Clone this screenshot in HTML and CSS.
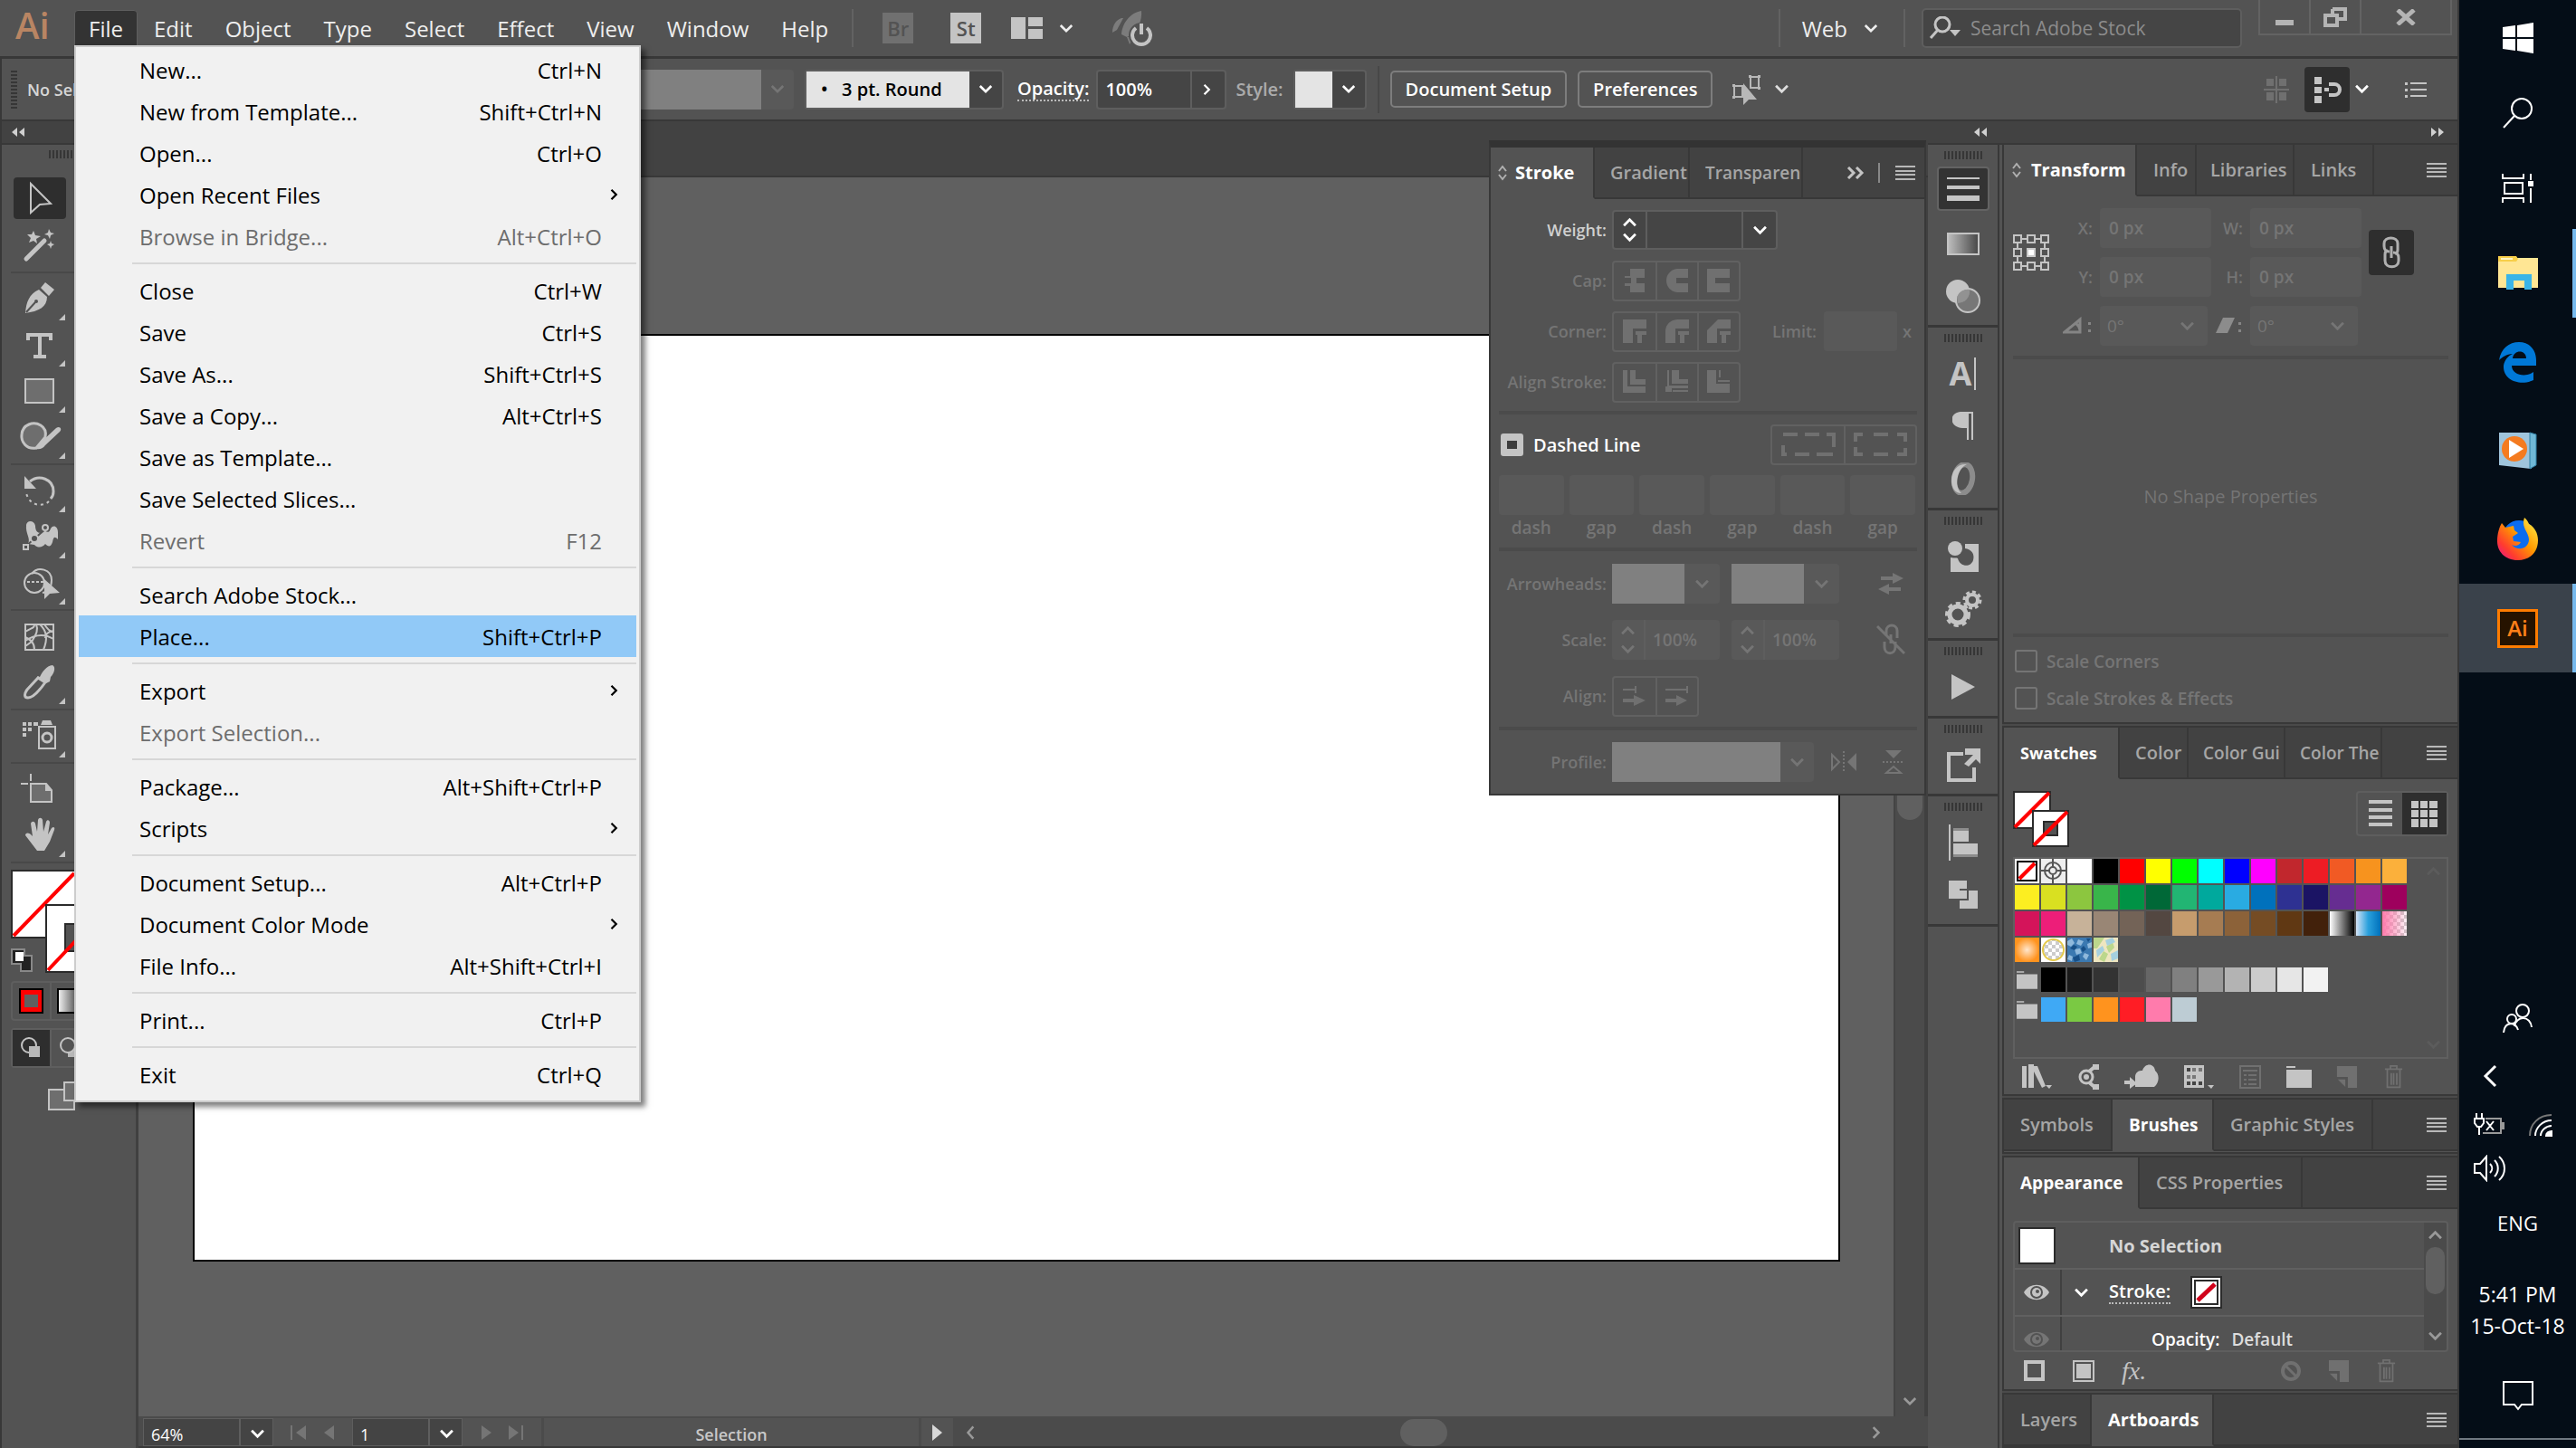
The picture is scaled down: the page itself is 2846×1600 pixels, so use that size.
FILE: index.html
```html
<!DOCTYPE html>
<html lang="en">

<head>
    <meta charset="UTF-8">
    <meta name="viewport" content="width=device-width, initial-scale=1.0">
    <title>Illustrator Workspace</title>
    <link rel="stylesheet" href="styles.css">
</head>

<body>
    <!-- Shared icons -->
    <svg class="sprite" aria-hidden="true">
        <symbol id="chev-down" viewBox="0 0 18 12"><path d="M2 2l7 7 7-7" fill="none" stroke="currentColor" stroke-width="3" /></symbol>
        <symbol id="chev-up" viewBox="0 0 18 12"><path d="M2 10l7-7 7 7" fill="none" stroke="currentColor" stroke-width="3" /></symbol>
        <symbol id="chev-right" viewBox="0 0 12 18"><path d="M2 2l7 7-7 7" fill="none" stroke="currentColor" stroke-width="3" /></symbol>
        <symbol id="chev-left" viewBox="0 0 12 18"><path d="M10 1L3 9l7 8" fill="none" stroke="currentColor" stroke-width="3" /></symbol>
        <symbol id="collapse" viewBox="0 0 16 12"><path d="M7 1v10L1 6zM15 1v10L9 6z" fill="currentColor" /></symbol>
        <symbol id="expand" viewBox="0 0 16 12"><path d="M1 1v10l6-5zM9 1v10l6-5z" fill="currentColor" /></symbol>
        <symbol id="lines" viewBox="0 0 22 16"><path d="M0 1h22M0 6h22M0 10h22M0 15h22" stroke="currentColor" stroke-width="2" /></symbol>
        <symbol id="updown" viewBox="0 0 12 20"><path d="M2 8l4-5 4 5M2 12l4 5 4-5" fill="none" stroke="currentColor" stroke-width="2" /></symbol>
        <symbol id="trash" viewBox="0 0 24 32"><path d="M1 6h22M8 5V2h8v3M4 7v22h16V7M9 11v15M12 11v15M16 11v15" fill="none" stroke="currentColor" stroke-width="2" /></symbol>
        <symbol id="newitem" viewBox="0 0 24 26"><path d="M0 0h24v26H13V13H0zM1 16h9v9z" fill="currentColor" /></symbol>
        <symbol id="folder" viewBox="0 0 28 24"><path d="M0 0h10v2H0zM0 4h28v20H0z" fill="currentColor" /></symbol>
        <symbol id="eye" viewBox="0 0 30 20"><path d="M1 10C7-1 23-1 29 10 23 21 7 21 1 10z" fill="currentColor" /><circle cx="15" cy="10" r="7" fill="#535353" /><circle cx="15" cy="10" r="5" fill="currentColor" /><circle cx="16" cy="9" r="2" fill="#535353" /></symbol>
    </svg>

    <div class="desktop">
        <div class="app">
            <header class="menubar">
                <span class="logo">Ai</span>
                <nav class="menus">
                    <div class="menu-root">
                        <button class="menu-button open">File</button>
                        <ul class="dropdown">
                            <li><button class="item">New...<kbd>Ctrl+N</kbd></button></li>
                            <li><button class="item">New from Template...<kbd>Shift+Ctrl+N</kbd></button></li>
                            <li><button class="item">Open...<kbd>Ctrl+O</kbd></button></li>
                            <li><button class="item sub">Open Recent Files<svg width="9" height="14"><use href="#chev-right" /></svg></button></li>
                            <li><button class="item" disabled>Browse in Bridge...<kbd>Alt+Ctrl+O</kbd></button></li>
                            <li class="sep"></li>
                            <li><button class="item">Close<kbd>Ctrl+W</kbd></button></li>
                            <li><button class="item">Save<kbd>Ctrl+S</kbd></button></li>
                            <li><button class="item">Save As...<kbd>Shift+Ctrl+S</kbd></button></li>
                            <li><button class="item">Save a Copy...<kbd>Alt+Ctrl+S</kbd></button></li>
                            <li><button class="item">Save as Template...</button></li>
                            <li><button class="item">Save Selected Slices...</button></li>
                            <li><button class="item" disabled>Revert<kbd>F12</kbd></button></li>
                            <li class="sep"></li>
                            <li><button class="item">Search Adobe Stock...</button></li>
                            <li><button class="item active">Place...<kbd>Shift+Ctrl+P</kbd></button></li>
                            <li class="sep"></li>
                            <li><button class="item sub">Export<svg width="9" height="14"><use href="#chev-right" /></svg></button></li>
                            <li><button class="item" disabled>Export Selection...</button></li>
                            <li class="sep"></li>
                            <li><button class="item">Package...<kbd>Alt+Shift+Ctrl+P</kbd></button></li>
                            <li><button class="item sub">Scripts<svg width="9" height="14"><use href="#chev-right" /></svg></button></li>
                            <li class="sep"></li>
                            <li><button class="item">Document Setup...<kbd>Alt+Ctrl+P</kbd></button></li>
                            <li><button class="item sub">Document Color Mode<svg width="9" height="14"><use href="#chev-right" /></svg></button></li>
                            <li><button class="item">File Info...<kbd>Alt+Shift+Ctrl+I</kbd></button></li>
                            <li class="sep"></li>
                            <li><button class="item">Print...<kbd>Ctrl+P</kbd></button></li>
                            <li class="sep"></li>
                            <li><button class="item">Exit<kbd>Ctrl+Q</kbd></button></li>
                        </ul>
                    </div>
                    <button class="menu-button">Edit</button>
                    <button class="menu-button">Object</button>
                    <button class="menu-button">Type</button>
                    <button class="menu-button">Select</button>
                    <button class="menu-button">Effect</button>
                    <button class="menu-button">View</button>
                    <button class="menu-button">Window</button>
                    <button class="menu-button">Help</button>
                </nav>
                <span class="vline"></span>
                <div class="launchers">
                    <button class="badge-button off">Br</button>
                    <button class="badge-button">St</button>
                    <button class="plain layout-button" aria-label="Arrange documents">
                        <svg width="35" height="24" fill="#c4c4c4"><path d="M0 0h16v24H0zM19 0h16v10H19zM19 13h16v11H19z" /></svg>
                        <svg width="16" height="11"><use href="#chev-down" /></svg>
                    </button>
                    <button class="plain" aria-label="GPU performance">
                        <svg width="48" height="40"><path d="M34 1c-12 2-21 13-22 26l6 3 4-2C30 22 35 12 34 1zM12 9C6 11 2 17 2 25l5-3 7-13zM18 30l3 8 5-8z" fill="#7c7c7c" /><circle cx="34" cy="28" r="10" fill="none" stroke="#535353" stroke-width="8" /><path d="M28 20a10 10 0 1 0 12 0M34 15v12" fill="none" stroke="#c4c4c4" stroke-width="4" /></svg>
                    </button>
                </div>
                <div class="menubar-right">
                    <span class="vline"></span>
                    <button class="plain workspace">Web <svg width="16" height="11"><use href="#chev-down" /></svg></button>
                    <span class="vline"></span>
                    <label class="search">
                        <svg width="36" height="26"><circle cx="15" cy="9" r="8" fill="none" stroke="#c4c4c4" stroke-width="3" /><path d="M10 15L2 24" stroke="#c4c4c4" stroke-width="3" /><path d="M23 15h12l-6 7z" fill="#c4c4c4" /></svg>
                        <input type="text" placeholder="Search Adobe Stock" aria-label="Search Adobe Stock">
                    </label>
                    <div class="window-buttons">
                        <button aria-label="Minimize"><svg width="20" height="20"><path d="M0 13h20v6H0z" fill="#b4b4b4" /></svg></button>
                        <button aria-label="Restore"><svg width="26" height="22"><path d="M10 2h14v11h-8M10 2v5M2 9h13v11H2z" fill="none" stroke="#b4b4b4" stroke-width="4" /></svg></button>
                        <button class="close" aria-label="Close"><svg width="22" height="18"><path d="M2 1l18 16M20 1L2 17" stroke="#b4b4b4" stroke-width="5" /></svg></button>
                    </div>
                </div>
            </header>

            <div class="controlbar">
                <span class="grip tall"></span>
                <span class="selection-name">No Selection</span>
                <label class="combo variable off"><select disabled aria-label="Variable width profile"><option></option></select><svg width="16" height="11"><use href="#chev-down" /></svg></label>
                <label class="combo brush"><select aria-label="Brush definition"><option>•&nbsp;&nbsp; 3 pt. Round</option></select><svg width="16" height="11"><use href="#chev-down" /></svg></label>
                <label class="dotted" for="opacity">Opacity:</label>
                <span class="opacity-field"><input id="opacity" type="text" value="100%"><button aria-label="Opacity slider"><svg width="9" height="16"><use href="#chev-right" /></svg></button></span>
                <label class="dim" for="style">Style:</label>
                <span class="combo style-combo"><select id="style"><option></option></select><svg width="16" height="11"><use href="#chev-down" /></svg></span>
                <span class="vline dark"></span>
                <button class="outline-button">Document Setup</button>
                <button class="outline-button">Preferences</button>
                <button class="plain select-similar" aria-label="Select similar">
                    <svg width="36" height="36"><path d="M22 4h9v12h-9zM4 14h9v12H4z" fill="none" stroke="#b8b8b8" stroke-width="2" /><path d="M14 11v24l6-6h9z" fill="#b8b8b8" /><path d="M20 2h3v3h-3zM30 2h3v3h-3zM30 15h3v3h-3zM2 12h3v3H2zM2 25h3v3H2z" fill="#b8b8b8" /></svg>
                    <svg width="17" height="11"><use href="#chev-down" /></svg>
                </button>
                <div class="control-right">
                    <button class="plain" aria-label="Align to pixel grid"><svg width="28" height="30"><path d="M3 3h8v8H3zM17 3h8v8h-8zM3 18h8v9H3zM17 18h8v9h-8z" fill="#707070" /><path d="M14 0v30M0 15h28" stroke="#707070" stroke-width="2" /></svg></button>
                    <button class="snap" aria-label="Snap to pixel"><svg width="34" height="30"><path d="M3 1h8v8H3zM3 12h8v7H3zM3 22h8v8H3z" fill="#c4c4c4" /><path d="M14 15h5M19 9h6a6 6 0 0 1 0 12h-6" fill="none" stroke="#c4c4c4" stroke-width="4" /></svg></button>
                    <button class="plain" aria-label="Snap options"><svg width="17" height="11"><use href="#chev-down" /></svg></button>
                    <button class="plain list-button" aria-label="Control panel menu"><svg width="24" height="18"><path d="M0 1h3v3H0zM0 8h3v3H0zM0 15h3v3H0zM6 1h18v2H6zM6 8h18v2H6zM6 15h18v2H6z" fill="#c4c4c4" /></svg></button>
                </div>
            </div>

            <div class="workspace-row">
                <aside class="tools">
                    <div class="strip"><svg width="16" height="12"><use href="#collapse" /></svg></div>
                    <div class="tool-list">
                        <span class="grip"></span>
                        <button class="tool on" aria-label="Selection"><svg width="58" height="46"><path d="M19 7v32l10-9 12-1z" fill="none" stroke="#c4c4c4" stroke-width="2" /></svg></button>
                        <button class="tool" aria-label="Magic wand"><svg width="58" height="46"><path d="M14 37l20-20" stroke="#c4c4c4" stroke-width="5" stroke-linecap="round" /><path d="M22 6l2 5 6 1-5 3 1 5-4-3-5 2 2-5-4-4h5zM39 4l2 4 4 1-4 2-1 4-2-4-4-1 4-2zM41 17l1 3 3 1-3 2-1 3-1-3-3-2 3-1z" fill="#c4c4c4" /></svg></button>
                        <hr>
                        <button class="tool more" aria-label="Pen"><svg width="58" height="46"><path d="M13 38c1-12 4-21 15-26l9 8c0 11-9 16-24 18zM30 10l5-6 10 8-6 7z" fill="#c4c4c4" /><path d="M14 37l10-11" stroke="#535353" stroke-width="2" /><circle cx="25" cy="25" r="2" fill="#535353" /></svg></button>
                        <button class="tool more" aria-label="Type"><svg width="58" height="46"><path d="M14 9h29v8h-4v-4h-8v20h5v4H22v-4h5V13h-9v4h-4z" fill="#c4c4c4" /></svg></button>
                        <button class="tool more" aria-label="Rectangle"><svg width="58" height="46"><path d="M13 9h31v26H13z" fill="#6e6e6e" stroke="#c4c4c4" stroke-width="2" /></svg></button>
                        <button class="tool more" aria-label="Shaper"><svg width="58" height="46"><path d="M25 34C14 36 8 27 9 19 10 8 22 4 30 9c5 3 6 8 5 13z" fill="#6e6e6e" stroke="#c4c4c4" stroke-width="3" /><path d="M24 35l7-8 16-15c4-3 7 1 4 4L35 31c-3 4-6 5-11 4z" fill="#c4c4c4" /></svg></button>
                        <hr>
                        <button class="tool more" aria-label="Rotate"><svg width="58" height="46"><path d="M18 12c10-8 26-3 26 11 0 4-2 7-3 8" fill="none" stroke="#c4c4c4" stroke-width="3" /><path d="M12 6v14h13z" fill="#c4c4c4" /><path d="M39 34c-6 6-21 6-25-9" fill="none" stroke="#c4c4c4" stroke-width="2" stroke-dasharray="3 4" /></svg></button>
                        <button class="tool more" aria-label="Width"><svg width="58" height="46"><path d="M14 9c1-6 9-5 10 1 0 5 2 8 6 8l4-2c4 0 5 3 7-3 3-5 8-2 8 4v8c-4-4-5-2-6 3-2 6-5 5-8 2-3 4-8 5-12 1l-7-1c3-7-3-11-2-21z" fill="#c4c4c4" /><path d="M22 25l14-12M22 25L12 34" stroke="#535353" stroke-width="2" /><circle cx="35" cy="12" r="3" fill="#535353" stroke="#c4c4c4" stroke-width="2" /><circle cx="23" cy="24" r="4" fill="#535353" stroke="#c4c4c4" stroke-width="2" /><path d="M11 31h5v5h-5z" fill="#535353" stroke="#c4c4c4" stroke-width="2" /></svg></button>
                        <button class="tool more" aria-label="Shape builder"><svg width="58" height="46"><circle cx="23" cy="22" r="11" fill="none" stroke="#c4c4c4" stroke-width="2" /><path d="M20 12c7-9 22-5 22 7 0 8-4 13-10 14" fill="none" stroke="#c4c4c4" stroke-width="2" /><path d="M15 21h20" stroke="#c4c4c4" stroke-width="2" stroke-dasharray="3 2" /><path d="M34 18v22l6-6 11-1z" fill="#c4c4c4" /></svg></button>
                        <hr>
                        <button class="tool" aria-label="Mesh"><svg width="58" height="46"><path d="M13 9h31v28H13zM13 17c8-5 10-4 10-8M13 27c9-6 20-9 31-2M13 33l7-5c4-7 8-12 5-19M29 9c8 7 9 16 4 28M34 9c5 7 7 8 10 8M23 37c0-8-4-11-10-14M35 24c0-5 4-7 9-8" fill="none" stroke="#c4c4c4" stroke-width="2" /></svg></button>
                        <button class="tool more" aria-label="Eyedropper"><svg width="58" height="46"><path d="M29 16c3-6 7-12 14-13 4 2 2 9-2 13l-1 5-4 2-10-8z" fill="#c4c4c4" /><path d="M27 17L15 30c-3 4-4 9 1 9 4 0 9-3 19-17z" fill="none" stroke="#c4c4c4" stroke-width="3" /></svg></button>
                        <hr>
                        <button class="tool more" aria-label="Symbol sprayer"><svg width="58" height="46"><path d="M10 7h4v4h-4zM16 7h4v4h-4zM22 7h5v4h-5zM10 13h4v4h-4zM16 13h4v4h-4zM10 19h4v4h-4zM30 10l2-5h9l2 5z" fill="#c4c4c4" /><path d="M28 12h18v24H28z" fill="none" stroke="#c4c4c4" stroke-width="2" /><circle cx="37" cy="24" r="5" fill="none" stroke="#c4c4c4" stroke-width="3" /></svg></button>
                        <hr>
                        <button class="tool" aria-label="Artboard"><svg width="58" height="46"><path d="M19 16h17l6 7v13H19z" fill="#6e6e6e" stroke="#c4c4c4" stroke-width="2" /><path d="M35 16v8h8zM8 15h8v2H8zM18 5h2v8h-2z" fill="#c4c4c4" /></svg></button>
                        <button class="tool more" aria-label="Hand"><svg width="58" height="46"><path d="M26 39L13 22c0-3 4-4 8 1L19 9c1-3 4-3 5 0l2 9 1-13c1-3 4-3 5 0l1 13 3-11c1-3 4-2 4 1l-2 13 4-7c2-2 4-1 3 2l-5 13-6 10z" fill="#c4c4c4" /></svg></button>
                        <hr>
                        <div class="paint">
                            <svg width="110" height="118"><path d="M1 1h70v74H1z" fill="#fff" stroke="#2b2b2b" stroke-width="2" /><path d="M3 73L70 4" stroke="#f00" stroke-width="4" /><path d="M39 39h70v74H39z" fill="#fff" stroke="#2b2b2b" stroke-width="2" /><path d="M60 60h28v30H60z" fill="#535353" stroke="#2b2b2b" stroke-width="2" /><path d="M41 111l66-70" stroke="#f00" stroke-width="4" /><path d="M1 88h14v7h8v17H11v-8H1z" fill="#222" stroke="#888" stroke-width="2" /><path d="M5 91h9v10H5z" fill="#fff" /></svg>
                        </div>
                        <div class="modes">
                            <button aria-label="Color"><svg width="27" height="28"><path d="M1 1h25v26H1z" fill="#f00" stroke="#000" stroke-width="2" /><path d="M6 7h15v14H6z" fill="#606060" /></svg></button>
                            <button aria-label="Gradient"><span class="gradient-chip"></span></button>
                            <button aria-label="None"></button>
                        </div>
                        <div class="modes">
                            <button class="on" aria-label="Draw normal"><svg width="24" height="24"><circle cx="10" cy="9" r="8" fill="none" stroke="#c4c4c4" stroke-width="2" /><path d="M10 10h12v12H10z" fill="#b8b8b8" /></svg></button>
                            <button aria-label="Draw behind"><svg width="24" height="24"><path d="M10 10h12v12H10z" fill="#b8b8b8" /><circle cx="10" cy="9" r="8" fill="#535353" stroke="#c4c4c4" stroke-width="2" /></svg></button>
                            <button aria-label="Draw inside"></button>
                        </div>
                        <button class="plain screen-mode" aria-label="Screen mode"><svg width="46" height="32"><path d="M1 9h28v22H1z" fill="#6e6e6e" stroke="#c4c4c4" stroke-width="2" /><path d="M18 1h27v20H18z" fill="#6e6e6e" stroke="#c4c4c4" stroke-width="2" /></svg></button>
                    </div>
                </aside>

                <main class="document">
                    <div class="doc-tabs"></div>
                    <div class="view">
                        <div class="canvas"><div class="artboard"></div></div>
                        <div class="vscroll"><span class="thumb"></span><svg width="16" height="11"><use href="#chev-down" /></svg></div>
                    </div>
                    <footer class="statusbar">
                        <input class="zoom" type="text" value="64%" aria-label="Zoom">
                        <button class="drop" aria-label="Zoom levels"><svg width="17" height="11"><use href="#chev-down" /></svg></button>
                        <button class="nav" aria-label="First and previous artboard"><svg width="52" height="16" fill="#757575"><path d="M2 0h2v16H2zM19 0v16L8 8zM50 0v16L39 8z" /></svg></button>
                        <input class="page" type="text" value="1" aria-label="Artboard number">
                        <button class="drop" aria-label="Artboards"><svg width="17" height="11"><use href="#chev-down" /></svg></button>
                        <button class="nav" aria-label="Next and last artboard"><svg width="52" height="16" fill="#757575"><path d="M4 0v16l11-8zM34 0v16l11-8zM48 0h2v16h-2z" /></svg></button>
                        <span class="status">Selection</span>
                        <button class="play" aria-label="Status options"><svg width="12" height="18"><path d="M0 0v18l11-9z" fill="#d8d8d8" /></svg></button>
                        <div class="hscroll"><svg width="10" height="16"><use href="#chev-left" /></svg><span class="thumb"></span><svg width="10" height="16"><use href="#chev-right" /></svg></div>
                    </footer>

                    <!-- Floating stroke panel -->
                    <section class="stroke-panel">
                        <div class="tabs">
                            <button class="tab on"><svg width="12" height="20"><use href="#updown" /></svg>Stroke</button>
                            <button class="tab gradient-tab">Gradient</button>
                            <button class="tab transparency-tab">Transparen</button>
                            <span class="tab-extra"><svg width="20" height="14"><path d="M2 1l6 6-6 6M11 1l6 6-6 6" fill="none" stroke="#c4c4c4" stroke-width="3" /></svg><i></i></span>
                            <button class="panel-menu" aria-label="Panel menu"><svg width="22" height="16"><use href="#lines" /></svg></button>
                        </div>
                        <div class="stroke-body">
                            <div class="stroke-rows">
                                <div class="srow">
                                    <label class="lit" for="weight">Weight:</label>
                                    <span class="stepper"><span class="arrows"><svg width="17" height="11"><use href="#chev-up" /></svg><svg width="17" height="11"><use href="#chev-down" /></svg></span><input id="weight" type="text"><button aria-label="Weight presets"><svg width="17" height="11"><use href="#chev-down" /></svg></button></span>
                                </div>
                                <div class="srow">
                                    <span class="name">Cap:</span>
                                    <span class="seg">
                                        <button disabled aria-label="Butt"><svg width="24" height="26"><path d="M7 0h16v10h-9v6h9v10H7v-7H1v-3h7v-6H1V8h6z" /></svg></button>
                                        <button disabled aria-label="Round"><svg width="26" height="26"><path d="M13 0h12v10H12v6h13v10H13C-3 24-3 2 13 0z" /></svg></button>
                                        <button disabled aria-label="Projecting"><svg width="26" height="26"><path d="M0 0h25v10H9v6h16v10H0z" /></svg></button>
                                    </span>
                                </div>
                                <div class="srow">
                                    <span class="name">Corner:</span>
                                    <span class="seg">
                                        <button disabled aria-label="Miter"><svg width="26" height="26"><path d="M0 0h26v10H11v16H0zM14 13h12v4h-5v9h-5v-9h-2z" /></svg></button>
                                        <button disabled aria-label="Round join"><svg width="26" height="26"><path d="M13 0h13v10H11v16H0V12C1 5 5 1 13 0zM14 13h12v4h-5v9h-5v-9h-2z" /></svg></button>
                                        <button disabled aria-label="Bevel"><svg width="26" height="26"><path d="M12 0h14v10H11v16H0V12zM14 13h12v4h-5v9h-5v-9h-2z" /></svg></button>
                                    </span>
                                    <label class="limit" for="limit">Limit:</label><input class="off-field limit-input" id="limit" type="text" disabled><span class="times">x</span>
                                </div>
                                <div class="srow">
                                    <span class="name">Align Stroke:</span>
                                    <span class="seg">
                                        <button disabled aria-label="Center"><svg width="26" height="26"><path d="M0 0h5v18h20v7H0zM8 0h6v10h11v6H8z" /></svg></button>
                                        <button disabled aria-label="Inside"><svg width="26" height="26"><path d="M2 0h2v17h21v3H7v4H0v-6h2zM7 0h8v10h10v5H7zM8 22h17v2H8z" /></svg></button>
                                        <button disabled aria-label="Outside"><svg width="26" height="26"><path d="M0 0h10v15h15v10H0zM13 0h2v8h-2zM12 11h13v2H12z" /></svg></button>
                                    </span>
                                </div>
                            </div>
                            <hr>
                            <div class="dashed-head">
                                <label class="dashed-label"><input type="checkbox" class="mixed">Dashed Line</label>
                                <span class="seg wide">
                                    <button disabled aria-label="Preserve dash"><svg width="60" height="26"><path d="M2 2h16M26 2h16M50 2h8v14M2 14v10h4M15 24h16M39 24h18" fill="none" stroke="#707070" stroke-width="4" /></svg></button>
                                    <button disabled aria-label="Align dash"><svg width="60" height="26"><path d="M2 10V2h8M22 2h16M48 2h9v8M57 17v7h-9M38 24H22M10 24H2v-8" fill="none" stroke="#707070" stroke-width="4" /></svg></button>
                                </span>
                            </div>
                            <div class="dashes">
                                <label><input type="text" disabled>dash</label>
                                <label><input type="text" disabled>gap</label>
                                <label><input type="text" disabled>dash</label>
                                <label><input type="text" disabled>gap</label>
                                <label><input type="text" disabled>dash</label>
                                <label><input type="text" disabled>gap</label>
                            </div>
                            <hr>
                            <div class="arrow-rows">
                                <div class="srow">
                                    <label for="arrow-start">Arrowheads:</label>
                                    <span class="combo off arrow"><select id="arrow-start" disabled><option></option></select><svg width="17" height="11"><use href="#chev-down" /></svg></span>
                                    <span class="combo off arrow"><select disabled aria-label="End arrowhead"><option></option></select><svg width="17" height="11"><use href="#chev-down" /></svg></span>
                                    <button class="row-icon" disabled aria-label="Swap arrowheads"><svg width="30" height="26"><path d="M4 5h13V1l12 6-12 6V9H4zM26 17H13v-4L1 19l12 6v-4h13z" fill="#757575" /></svg></button>
                                </div>
                                <div class="srow">
                                    <label for="scale-start">Scale:</label>
                                    <span class="stepper off"><span class="arrows"><svg width="17" height="11"><use href="#chev-up" /></svg><svg width="17" height="11"><use href="#chev-down" /></svg></span><input id="scale-start" type="text" value="100%" disabled></span>
                                    <span class="stepper off"><span class="arrows"><svg width="17" height="11"><use href="#chev-up" /></svg><svg width="17" height="11"><use href="#chev-down" /></svg></span><input type="text" value="100%" disabled aria-label="End scale"></span>
                                    <button class="row-icon" disabled aria-label="Link scales"><svg width="32" height="36"><path d="M11 14V8c0-8 12-8 12 0v8M9 20v6c0 9 12 9 12 0v-6M16 12v10M1 3l30 30" fill="none" stroke="#757575" stroke-width="3" /></svg></button>
                                </div>
                                <div class="srow">
                                    <span class="name">Align:</span>
                                    <span class="seg">
                                        <button disabled aria-label="Extend past path"><svg width="26" height="22"><path d="M0 3h13V0h2v8h-2V5H0zM0 14h12v-4l13 6-13 6v-4H0z" /></svg></button>
                                        <button disabled aria-label="Place at path end"><svg width="26" height="22"><path d="M0 3h23V0h2v8h-2V5H0zM0 14h12v-4l12 6-12 6v-4H0z" /></svg></button>
                                    </span>
                                </div>
                            </div>
                            <hr>
                            <div class="srow profile-row">
                                <label for="profile">Profile:</label>
                                <span class="combo off profile"><select id="profile" disabled><option></option></select><svg width="17" height="11"><use href="#chev-down" /></svg></span>
                                <button class="row-icon" disabled aria-label="Flip along"><svg width="30" height="24"><path d="M2 4l8 8-8 8z" fill="none" stroke="#757575" stroke-width="2" /><path d="M15 0v24" stroke="#757575" stroke-width="2" stroke-dasharray="2 2" /><path d="M29 2v20L19 12z" fill="#757575" /></svg></button>
                                <button class="row-icon" disabled aria-label="Flip across"><svg width="24" height="28"><path d="M3 1h18l-9 9z" fill="#757575" /><path d="M0 14h24" stroke="#757575" stroke-width="2" stroke-dasharray="2 2" /><path d="M4 26l8-7 8 7z" fill="none" stroke="#757575" stroke-width="2" /></svg></button>
                            </div>
                        </div>
                    </section>
                </main>

                <div class="docked">
                    <div class="strip double"><svg width="16" height="12"><use href="#collapse" /></svg><svg width="16" height="12"><use href="#expand" /></svg></div>
                    <div class="docked-row">
                        <aside class="icon-dock">
                            <div class="dock-group">
                                <span class="grip"></span>
                                <button class="dock-button on" aria-label="Stroke"><svg width="36" height="26"><path d="M0 1h36" stroke="#c4c4c4" stroke-width="2" /><path d="M0 11h36" stroke="#c4c4c4" stroke-width="4" /><path d="M0 23h36" stroke="#c4c4c4" stroke-width="6" /></svg></button>
                                <button class="dock-button" aria-label="Gradient"><span class="gradient-chip big"></span></button>
                                <button class="dock-button" aria-label="Transparency"><svg width="40" height="38"><circle cx="14" cy="14" r="13" fill="#c4c4c4" /><circle cx="25" cy="24" r="13" fill="#777" stroke="#c4c4c4" stroke-width="2" /><path d="M13 20a13 13 0 0 1 14-8 13 13 0 0 1-13 15z" fill="#929292" /></svg></button>
                            </div>
                            <div class="dock-group">
                                <span class="grip"></span>
                                <button class="dock-button glyph" aria-label="Character"><b>A</b><i class="caret"></i></button>
                                <button class="dock-button" aria-label="Paragraph"><svg width="24" height="32"><path d="M23 0v31h-2V2h-3v29h-2V18h-5C-4 17-4 1 9 0z" fill="#c4c4c4" /></svg></button>
                                <button class="dock-button" aria-label="OpenType"><svg width="30" height="36"><ellipse cx="15" cy="18" rx="10" ry="16" fill="none" stroke="#8c8c8c" stroke-width="6" transform="rotate(10 15 18)" /><path d="M19 2C9 1 2 9 2 20c0 8 4 14 11 14C4 26 9 6 19 2z" fill="#c4c4c4" /></svg></button>
                            </div>
                            <div class="dock-group">
                                <span class="grip"></span>
                                <button class="dock-button" aria-label="Asset export"><svg width="36" height="36"><circle cx="9" cy="9" r="8" fill="#c4c4c4" /><path d="M20 4h15v31H4V19c5 1 6 0 8 1 2 9 14 11 17 2 2-7-2-12-9-13z" fill="#c4c4c4" /></svg></button>
                                <button class="dock-button" aria-label="Actions"><svg width="42" height="42"><circle cx="15" cy="27" r="9" fill="none" stroke="#c4c4c4" stroke-width="5" /><circle cx="15" cy="27" r="12" fill="none" stroke="#c4c4c4" stroke-width="4" stroke-dasharray="5 4" /><circle cx="31" cy="11" r="6" fill="none" stroke="#c4c4c4" stroke-width="4" /><circle cx="31" cy="11" r="9" fill="none" stroke="#c4c4c4" stroke-width="3" stroke-dasharray="4 3" /></svg></button>
                            </div>
                            <div class="dock-group">
                                <span class="grip"></span>
                                <button class="dock-button" aria-label="Play"><svg width="28" height="28"><path d="M1 0v28l26-14z" fill="#c4c4c4" /></svg></button>
                            </div>
                            <div class="dock-group">
                                <span class="grip"></span>
                                <button class="dock-button" aria-label="Export"><svg width="40" height="38"><path d="M20 7H4v29h28V22" fill="none" stroke="#c4c4c4" stroke-width="4" /><path d="M22 1h17v17l-5-5-8 8-5-3 10-10h-9z" fill="#c4c4c4" /></svg></button>
                            </div>
                            <div class="dock-group">
                                <span class="grip"></span>
                                <button class="dock-button" aria-label="Align"><svg width="32" height="40"><path d="M0 0h2v40H0zM5 4h17v15H5zM5 21h27v14H5z" fill="#c4c4c4" /><path d="M5 4h17v3H5zM5 33h27v3H5z" fill="#8c8c8c" /></svg></button>
                                <button class="dock-button" aria-label="Pathfinder"><svg width="32" height="32"><path d="M0 0h20v9h-8v11H0zM22 11h10v20H12v-9h10zM12 11h8v9h-8z" fill="#c4c4c4" /></svg></button>
                            </div>
                        </aside>

                        <aside class="panels">
                            <section class="panel transform">
                                <div class="tabs">
                                    <button class="tab on transform-tab"><svg width="12" height="20"><use href="#updown" /></svg>Transform</button>
                                    <button class="tab info-tab">Info</button>
                                    <button class="tab libraries-tab">Libraries</button>
                                    <button class="tab links-tab">Links</button>
                                    <button class="panel-menu" aria-label="Panel menu"><svg width="22" height="16"><use href="#lines" /></svg></button>
                                </div>
                                <div class="transform-grid">
                                    <svg class="refpoint" width="40" height="40" fill="none" stroke="#c4c4c4" stroke-width="2"><path d="M1 1h8v8H1zM16 1h8v8h-8zM31 1h8v8h-8zM1 16h8v8H1zM31 16h8v8h-8zM1 31h8v8H1zM16 31h8v8h-8zM31 31h8v8h-8zM9 5h7M24 5h7M9 35h7M24 35h7M5 9v7M5 24v7M35 9v7M35 24v7" /><path d="M16 16h8v8h-8z" fill="#fff" stroke="#ccc" /></svg>
                                    <label for="tx">X:</label><input id="tx" class="off-field" type="text" value="0 px" disabled>
                                    <label for="tw">W:</label><input id="tw" class="off-field" type="text" value="0 px" disabled>
                                    <button class="link-button" aria-label="Constrain proportions"><svg width="20" height="36"><path d="M8 17c-5 0-6-3-6-6V8c0-8 15-8 15 0v7c0 2-1 4-3 4M12 18c5 0 6 3 6 6v3c0 9-15 9-15 0v-7c0-2 1-4 3-4M10 11v13" fill="none" stroke="#b0b0b0" stroke-width="3" /></svg></button>
                                    <label for="ty">Y:</label><input id="ty" class="off-field" type="text" value="0 px" disabled>
                                    <label for="th">H:</label><input id="th" class="off-field" type="text" value="0 px" disabled>
                                    <label for="rotate"><svg width="33" height="20"><path d="M2 17L19 3v14zM14 7c4 3 5 6 5 9" fill="none" stroke="#858585" stroke-width="3" /><path d="M28 6h3v3h-3zM28 14h3v3h-3z" fill="#858585" /></svg></label>
                                    <span class="combo angle"><select id="rotate" disabled><option>0°</option></select><svg width="17" height="11"><use href="#chev-down" /></svg></span>
                                    <label for="shear"><svg width="30" height="20"><path d="M8 1h13l-8 17H0z" fill="#8c8c8c" /><path d="M25 6h3v3h-3zM25 14h3v3h-3z" fill="#858585" /></svg></label>
                                    <span class="combo angle"><select id="shear" disabled><option>0°</option></select><svg width="17" height="11"><use href="#chev-down" /></svg></span>
                                </div>
                                <p class="no-shape">No Shape Properties</p>
                                <div class="scale-options">
                                    <label><input type="checkbox" disabled>Scale Corners</label>
                                    <label><input type="checkbox" disabled>Scale Strokes &amp; Effects</label>
                                </div>
                            </section>

                            <section class="panel">
                                <div class="tabs">
                                    <button class="tab on swatches-tab">Swatches</button>
                                    <button class="tab color-tab">Color</button>
                                    <button class="tab guide-tab">Color Gui</button>
                                    <button class="tab guide-tab">Color The</button>
                                    <button class="panel-menu" aria-label="Panel menu"><svg width="22" height="16"><use href="#lines" /></svg></button>
                                </div>
                                <div class="swatch-head">
                                    <svg width="62" height="62"><path d="M1 1h40v40H1z" fill="#fff" stroke="#2b2b2b" stroke-width="2" /><path d="M2 40L40 2" stroke="#f00" stroke-width="4" /><path d="M22 22h39v39H22z" fill="#fff" stroke="#2b2b2b" stroke-width="2" /><path d="M34 34h15v15H34z" fill="#535353" stroke="#2b2b2b" stroke-width="2" /><path d="M23 60l37-37" stroke="#f00" stroke-width="4" /></svg>
                                    <span class="view-switch">
                                        <button aria-label="List view"><svg width="26" height="30"><path d="M0 2h26M0 11h26M0 19h26M0 27h26" stroke="#c4c4c4" stroke-width="4" /></svg></button>
                                        <button class="on" aria-label="Thumbnail view"><svg width="29" height="29"><path d="M0 0h8v8H0zM10 0h8v8h-8zM20 0h9v8h-9zM0 10h8v8H0zM10 10h8v8h-8zM20 10h9v8h-9zM0 20h8v9H0zM10 20h8v9h-8zM20 20h9v9h-9z" fill="#c4c4c4" /></svg></button>
                                    </span>
                                </div>
                                <div class="swatch-list">
                                    <div id="swatches"></div>
                                    <div class="faint-scroll"><svg width="17" height="11"><use href="#chev-up" /></svg><svg width="17" height="11"><use href="#chev-down" /></svg></div>
                                </div>
                                <div class="panel-foot">
                                    <button aria-label="Swatch libraries"><svg width="34" height="28"><path d="M0 2h5v24H0zM7 0h6v26H7zM13 2h4l9 22-4 2-9-18zM26 23h7l-3 4z" fill="#c4c4c4" /></svg></button>
                                    <button aria-label="Libraries panel"><svg width="24" height="28"><circle cx="9" cy="14" r="7" fill="none" stroke="#c4c4c4" stroke-width="3" /><circle cx="9" cy="14" r="3" fill="#c4c4c4" /><path d="M12 8l6-5M12 20l6 5" stroke="#c4c4c4" stroke-width="4" /><path d="M16 0h7v6h-7zM16 22h7v6h-7z" fill="#c4c4c4" /></svg></button>
                                    <button aria-label="Add to library"><svg width="38" height="28"><path d="M12 25V13c1-5 4-6 8-6 3-9 13-8 14 0 5 4 5 13-1 18zM0 18h6v-4l8 7-8 6v-5H0z" fill="#c4c4c4" /></svg></button>
                                    <button aria-label="Show swatch kinds"><svg width="34" height="28"><path d="M0 1h22v25H0z" fill="#c4c4c4" /><path d="M3 4h4v4H3zM16 19h4v4h-4zM3 19h4v4H3zM9 19h4v4H9z" fill="#444" /><path d="M9 4h4v4H9zM16 4h4v4h-4zM3 12h4v4H3zM9 12h4v4H9z" fill="#777" /><path d="M26 23h7l-3 4z" fill="#c4c4c4" /></svg></button>
                                    <button aria-label="Swatch options" disabled><svg width="24" height="28"><path d="M1 2h22v24H1zM4 7h16M5 12h3M10 12h9M5 17h3M10 17h9M5 22h3M10 22h9" fill="none" stroke="currentColor" stroke-width="2" /></svg></button>
                                    <button aria-label="New color group"><svg width="28" height="24"><use href="#folder" /></svg></button>
                                    <button aria-label="New swatch" disabled><svg width="24" height="24"><use href="#newitem" /></svg></button>
                                    <button aria-label="Delete swatch" disabled><svg width="23" height="28"><use href="#trash" /></svg></button>
                                </div>
                            </section>

                            <section class="panel brushes">
                                <div class="tabs">
                                    <button class="tab symbols-tab">Symbols</button>
                                    <button class="tab on brushes-tab">Brushes</button>
                                    <button class="tab styles-tab">Graphic Styles</button>
                                    <button class="panel-menu" aria-label="Panel menu"><svg width="22" height="16"><use href="#lines" /></svg></button>
                                </div>
                            </section>

                            <section class="panel">
                                <div class="tabs">
                                    <button class="tab on appearance-tab">Appearance</button>
                                    <button class="tab css-tab">CSS Properties</button>
                                    <button class="panel-menu" aria-label="Panel menu"><svg width="22" height="16"><use href="#lines" /></svg></button>
                                </div>
                                <div class="appearance">
                                    <div class="appearance-rows">
                                        <div class="arow first"><span class="thumb-box"></span><b>No Selection</b></div>
                                        <div class="arow"><span class="eye-cell"><svg width="30" height="20"><use href="#eye" /></svg></span><svg class="twirl" width="17" height="11"><use href="#chev-down" /></svg><a class="dotted" href="#stroke">Stroke:</a><svg class="none-chip" width="35" height="36"><path d="M1 1h33v34H1z" fill="#fff" stroke="#2b2b2b" stroke-width="2" /><path d="M5 5h25v26H5z" fill="#fff" stroke="#2b2b2b" stroke-width="2" /><path d="M8 27L27 9" stroke="#d0021b" stroke-width="5" /></svg></div>
                                        <div class="arow"><span class="eye-cell faded"><svg width="30" height="20"><use href="#eye" /></svg></span><span class="opacity-row">Opacity: <em>Default</em></span></div>
                                    </div>
                                    <div class="list-scroll"><svg width="17" height="11"><use href="#chev-up" /></svg><span class="thumb"></span><svg width="17" height="11"><use href="#chev-down" /></svg></div>
                                </div>
                                <div class="panel-foot appearance-foot">
                                    <button aria-label="Add new stroke"><svg width="24" height="24"><path d="M2 2h19v19H2z" fill="none" stroke="#c4c4c4" stroke-width="4" /></svg></button>
                                    <button aria-label="Add new fill"><svg width="24" height="24"><path d="M1 1h22v22H1z" fill="none" stroke="#c4c4c4" stroke-width="2" /><path d="M4 4h16v16H4z" fill="#c4c4c4" /></svg></button>
                                    <button aria-label="Add new effect" class="fx">fx.</button>
                                    <button aria-label="Clear appearance" disabled><svg width="24" height="24"><circle cx="12" cy="12" r="9" fill="none" stroke="currentColor" stroke-width="4" /><path d="M6 6l12 12" stroke="currentColor" stroke-width="3" /></svg></button>
                                    <button aria-label="Duplicate item" disabled><svg width="22" height="24"><use href="#newitem" /></svg></button>
                                    <button aria-label="Delete item" disabled><svg width="23" height="28"><use href="#trash" /></svg></button>
                                </div>
                            </section>

                            <section class="panel">
                                <div class="tabs">
                                    <button class="tab layers-tab">Layers</button>
                                    <button class="tab on artboards-tab">Artboards</button>
                                    <button class="panel-menu" aria-label="Panel menu"><svg width="22" height="16"><use href="#lines" /></svg></button>
                                </div>
                            </section>
                        </aside>
                    </div>
                </div>
            </div>
        </div>

        <!-- Windows taskbar -->
        <aside class="taskbar">
            <button class="sys" aria-label="Start"><svg width="34" height="34" fill="#fff"><path d="M0 5l14-2v13H0zM16 3l18-3v16H16zM0 18h14v13L0 29zM16 18h18v16l-18-3z" /></svg></button>
            <button class="sys" aria-label="Search"><svg width="36" height="36"><circle cx="22" cy="13" r="11" fill="none" stroke="#fff" stroke-width="2" /><path d="M14 21L2 34" stroke="#fff" stroke-width="2" /></svg></button>
            <button class="sys" aria-label="Task view"><svg width="36" height="32"><path d="M1 0v5h23V0M3 10h20v12H3zM1 32v-5h23v5M32 0v7M32 16v16" fill="none" stroke="#fff" stroke-width="2" /><path d="M29 8h6v6h-6z" fill="#fff" /></svg></button>
            <button class="task running" aria-label="File Explorer"><svg width="46" height="40"><path d="M1 3h44v33H1z" fill="#ffe694" /><path d="M1 1h20l2 3-2 3H1z" fill="#f7cf4a" /><path d="M4 3h13v2H4z" fill="#fff3c4" /><path d="M10 38V21h28v17h-8V28H18v10z" fill="#3ab4e8" /></svg></button>
            <button class="task" aria-label="Edge"><svg width="46" height="46"><path d="M2 21C4 8 13 1 24 1c12 0 19 9 19 20v6H16c0 10 15 14 24 7v9C25 50 6 43 7 27c1-6 5-11 10-13-7 0-12 4-15 7zm15-2h15c0-10-14-10-15 0z" fill="#0078d7" fill-rule="evenodd" /></svg></button>
            <button class="task" aria-label="Media Player"><svg width="44" height="42"><path d="M1 1h36v40L1 37z" fill="#9fc4dc" /><path d="M35 1l7 2v34l-7 4z" fill="#6fb7d6" stroke="#2f7ea3" /><circle cx="18" cy="19" r="14" fill="#f47b20" /><path d="M12 9v20l16-10z" fill="#fff" /></svg></button>
            <button class="task" aria-label="Firefox"><svg width="48" height="48"><defs><linearGradient id="fox" x1="1" y1="0" x2="0" y2="1"><stop offset="0" stop-color="#fff44f" /><stop offset=".45" stop-color="#ff9800" /><stop offset=".75" stop-color="#ff3b30" /><stop offset="1" stop-color="#e3109b" /></linearGradient></defs><circle cx="25" cy="21" r="18" fill="#0a6cf0" /><path d="M6 6l4 5 9-2 1 5 4 3-6 4 1 5 8 1c-2 4-6 5-10 3 7 8 19 4 19-6 0-8-9-13-5-24 3 2 4 5 5 7 6 3 10 10 10 18 0 14-10 22-22 22C9 47 1 37 1 26 1 18 3 11 6 6z" fill="url(#fox)" /></svg></button>
            <button class="task running current" aria-label="Illustrator"><span class="ai-tile">Ai</span></button>
            <div class="tray">
                <button class="people" aria-label="People"><svg width="34" height="34" fill="none" stroke="#fff" stroke-width="2"><circle cx="22" cy="9" r="7" /><path d="M13 26c2-12 18-12 19 1" /><circle cx="10" cy="18" r="5" /><path d="M1 33c1-13 14-12 16-3" /></svg></button>
                <button class="tray-chevron" aria-label="Show hidden icons"><svg width="16" height="26"><path d="M14 2L3 13l11 11" fill="none" stroke="#fff" stroke-width="3" /></svg></button>
                <div class="tray-icons">
                    <svg width="34" height="26"><path d="M13 6h17v16H10" fill="none" stroke="#999" stroke-width="2" /><path d="M31 10h3v8h-3z" fill="#999" /><path d="M3 0v6M9 0v6M1 6h10v5l-3 4H4l-3-4zM6 15v9M14 9l8 10M22 9l-8 10" fill="none" stroke="#fff" stroke-width="2" /></svg>
                    <svg width="28" height="26" fill="none" stroke-width="2"><path d="M2 25C2 12 12 2 26 2" stroke="#777" /><path d="M8 25c0-9 8-17 18-17M14 25c0-6 6-11 12-11" stroke="#fff" /><path d="M20 25c0-3 3-5 6-5v5z" fill="#fff" stroke="#fff" /></svg>
                </div>
                <div class="tray-icons"><svg width="36" height="30" fill="none" stroke="#fff" stroke-width="2"><path d="M1 10h6l7-8v26l-7-8H1zM18 10c3 3 3 7 0 10M23 6c5 5 5 13 0 18M28 2c8 7 8 19 0 26" /></svg></div>
                <span class="lang">ENG</span>
                <time class="clock">5:41 PM<br>15-Oct-18</time>
                <button class="action" aria-label="Action center"><svg width="34" height="34"><path d="M1 1h32v25H21l-4 5-4-5H1z" fill="none" stroke="#fff" stroke-width="2" /></svg></button>
            </div>
        </aside>
    </div>

    <script>
        // One array per swatch row; names that are not hex colors map to CSS classes
        const swatchRows = [
            ["none", "registration", "#ffffff", "#000000", "#ff0000", "#ffff00", "#00ff00", "#00ffff", "#0000ff", "#ff00ff", "#c1272d", "#ed1c24", "#f15a24", "#f7931e", "#fbb03b"],
            ["#fcee21", "#d9e021", "#8cc63f", "#39b54a", "#009245", "#006837", "#22b573", "#00a99d", "#29abe2", "#0071bc", "#2e3192", "#1b1464", "#662d91", "#93278f", "#9e005d"],
            ["#d4145a", "#ed1e79", "#c7b299", "#998675", "#736357", "#534741", "#c69c6d", "#a67c52", "#8c6239", "#754c24", "#603813", "#42210b", "fade-black", "fade-blue", "fade-pink"],
            ["sun", "rings", "water", "leaves"],
            ["folder", "#000000", "#1a1a1a", "#333333", "#4d4d4d", "#666666", "#808080", "#999999", "#b3b3b3", "#cccccc", "#e6e6e6", "#f2f2f2"],
            ["folder", "#3fa9f5", "#7ac943", "#ff931e", "#ff1d25", "#ff7bac", "#bdccd4"]
        ];

        const icons = {
            none: '<svg width="27" height="27"><path d="M3 3h21v21H3z" fill="#fff" stroke="#000" stroke-width="2"/><path d="M5 22L22 5" stroke="#f00" stroke-width="4"/></svg>',
            registration: '<svg width="27" height="27" fill="none" stroke="#555" stroke-width="2"><circle cx="13" cy="13" r="9"/><circle cx="13" cy="13" r="4"/><path d="M13 0v9M13 18v9M0 13h9M18 13h9"/></svg>',
            water: '<svg width="27" height="27"><path d="M0 4l5-3 3 5-4 4-4-2zM12 2l6 2-3 5-5-2zM22 7l5-2v6l-4 1zM8 13l6-1 2 5-6 2zM19 17l5 2-3 6-4-4zM2 19l4 2-1 5-5-2z" fill="#8fb9dc"/><path d="M7 8l4 2-3 4-5-2zM18 9l3 4-4 3-2-4zM6 22l7-3 1 6-6 2zM21 1h5l-3 4z" fill="#174f87"/></svg>',
            leaves: '<svg width="27" height="27"><path d="M0 0h12L4 12H0zM14 10l7-5 2 6-6 6zM6 24l5-9 5 3-4 9z" fill="#bcd78c"/><path d="M13 3l8-3 3 5-9 4zM3 14l7-5 2 5-8 8zM19 18l8-4v9l-7 3z" fill="#a5d0df"/></svg>',
            folder: '<svg width="23" height="20"><use href="#folder"/></svg>'
        };

        const list = document.getElementById("swatches");
        swatchRows.forEach((row) => {
            const line = document.createElement("div");
            line.className = row[0] === "folder" ? "swatch-row group" : "swatch-row";
            row.forEach((color) => {
                const swatch = document.createElement("button");
                swatch.className = "swatch";
                swatch.setAttribute("aria-label", color);
                if (color.startsWith("#")) {
                    swatch.style.backgroundColor = color;
                } else {
                    swatch.classList.add("swatch-" + color);
                    swatch.innerHTML = icons[color] || "";
                }
                line.appendChild(swatch);
            });
            list.appendChild(line);
        });
    </script>
</body>

</html>
```

FILE: styles.css
```css
* {
    box-sizing: border-box;
}

body {
    margin: 0;
    font-family: "Open Sans", "Noto Sans", sans-serif;
    font-size: 20px;
    color: #d6d6d6;
    background-color: #535353;
}

button,
input,
select {
    font: inherit;
    color: inherit;
    margin: 0;
    padding: 0;
    border: none;
    border-radius: 0;
    background: none;
    outline: none;
}

select {
    appearance: none;
}

svg {
    display: block;
    flex-shrink: 0;
}

hr {
    margin: 0;
    border: none;
}

.sprite {
    position: absolute;
    width: 0;
    height: 0;
}

.desktop {
    display: flex;
    height: 100vh;
    overflow: hidden;
}

.app {
    flex: 1;
    min-width: 0;
    display: flex;
    flex-direction: column;
    border-right: 2px solid #383838;
}

.plain {
    display: flex;
    align-items: center;
}

/* Menu bar */
.menubar {
    height: 65px;
    flex-shrink: 0;
    display: flex;
    align-items: center;
    border-bottom: 3px solid #383838;
    font-size: 24px;
    color: #eee;
}

.logo {
    width: 82px;
    padding: 0 0 6px 17px;
    font-size: 40px;
    font-weight: 600;
    line-height: 44px;
    color: #b98563;
}

.menus {
    display: flex;
}

.menu-root {
    position: relative;
}

.menu-button {
    height: 40px;
    padding: 0 18px;
}

.menu-button.open {
    background-color: #333;
    border: 1px solid #5e5e5e;
    border-radius: 4px 4px 0 0;
    padding: 0 15px;
}

.dropdown {
    position: absolute;
    z-index: 10;
    top: 39px;
    left: 0;
    width: 626px;
    margin: 0;
    padding: 2px 3px 6px;
    list-style: none;
    color: #000;
    background-color: #f1f1f1;
    border: 2px solid #ccc;
    box-shadow: 5px 5px 6px rgba(0, 0, 0, 0.5);
}

.item {
    width: 100%;
    height: 46px;
    padding: 0 38px 0 67px;
    display: flex;
    align-items: center;
    justify-content: space-between;
    text-align: left;
    white-space: nowrap;
}

.item kbd {
    font: inherit;
}

.item.sub {
    padding-right: 20px;
}

.item.active {
    background-color: #91c9f7;
}

.item:disabled {
    color: #6d6d6d;
}

.sep {
    height: 2px;
    margin: 6px 0 6px 59px;
    background-color: #d7d7d7;
}

.vline {
    width: 2px;
    height: 42px;
    background-color: #626262;
}

.menus + .vline {
    margin-left: 8px;
}

.vline.dark {
    height: 52px;
    background-color: #474747;
}

.launchers {
    display: flex;
    align-items: center;
    gap: 41px;
    margin-left: 32px;
}

.badge-button {
    width: 34px;
    height: 34px;
    color: #535353;
    background-color: #c4c4c4;
    font-size: 22px;
    font-weight: 600;
    line-height: 34px;
}

.badge-button.off {
    background-color: #707070;
}

.layout-button {
    gap: 18px;
    margin-left: -8px;
}

.menubar-right {
    height: 100%;
    margin-left: auto;
    display: flex;
    align-items: center;
}

.workspace {
    gap: 18px;
    margin: 0 28px 0 24px;
}

.search {
    width: 354px;
    height: 44px;
    margin: 0 18px;
    padding-left: 6px;
    display: flex;
    align-items: center;
    gap: 10px;
    background-color: #454545;
    border: 2px solid #5e5e5e;
    border-radius: 5px;
}

.search input {
    flex: 1;
    min-width: 0;
    font-size: 21px;
}

.search input::placeholder {
    color: #8c8c8c;
}

.window-buttons {
    align-self: flex-start;
    height: 39px;
    margin-right: 6px;
    display: flex;
    border: 2px solid #636363;
    border-top: none;
}

.window-buttons button {
    width: 56px;
    display: flex;
    align-items: center;
    justify-content: center;
    border-right: 2px solid #636363;
}

.window-buttons .close {
    width: 98px;
    border-right: none;
}

/* Control bar */
.controlbar {
    height: 69px;
    flex-shrink: 0;
    display: flex;
    align-items: center;
    padding: 0 34px 0 10px;
    font-weight: 600;
    border-bottom: 2px solid #383838;
    border-left: 2px solid #383838;
}

.grip {
    width: 42px;
    height: 9px;
    background: repeating-linear-gradient(to right, #363636 0 2px, #535353 2px 4px);
}

.grip.tall {
    width: 7px;
    height: 42px;
    background: repeating-linear-gradient(to bottom, #363636 0 2px, #535353 2px 4px);
}

.selection-name {
    width: 560px;
    padding-left: 11px;
    font-size: 18px;
}

.combo {
    height: 44px;
    display: flex;
    align-items: center;
    background-color: #454545;
    border: 2px solid #5e5e5e;
    border-radius: 4px;
    color: #fff;
}

.combo select {
    flex: 1;
    min-width: 0;
    height: 100%;
    background-color: #e4e4e4;
    color: #000;
}

.combo svg {
    margin: 0 10px;
}

.combo.off {
    color: #757575;
    background-color: #595959;
    border: none;
}

.combo.off select {
    background-color: #808080;
    opacity: 1;
}

.variable {
    width: 298px;
    margin-right: 12px;
}

.brush {
    width: 220px;
    margin-right: 15px;
}

.brush select {
    padding-left: 16px;
}

.dotted {
    color: #fff;
    text-decoration: none;
    font-weight: 600;
    line-height: 24px;
    border-bottom: 2px dotted #bbb;
}

.opacity-field {
    width: 144px;
    height: 44px;
    margin: 0 10px 0 8px;
    display: flex;
    color: #fff;
    background-color: #454545;
    border: 2px solid #5e5e5e;
    border-radius: 4px;
}

.opacity-field input {
    flex: 1;
    min-width: 0;
    padding-left: 8px;
}

.opacity-field button {
    width: 38px;
    padding-left: 12px;
    border-left: 2px solid #5e5e5e;
}

.dim {
    color: #ababab;
}

.style-combo {
    width: 81px;
    margin: 0 12px 0 11px;
}

.outline-button {
    height: 41px;
    padding: 0 15px;
    margin-left: 12px;
    color: #fff;
    border: 2px solid #7d7d7d;
    border-radius: 5px;
}

.select-similar {
    gap: 12px;
    margin-left: 20px;
    color: #ddd;
}

.control-right {
    margin-left: auto;
    display: flex;
    align-items: center;
    gap: 5px;
    color: #fff;
}

.snap {
    width: 50px;
    height: 50px;
    padding-left: 8px;
    margin-left: 12px;
    background-color: #2e2e2e;
    border-radius: 4px;
}

.list-button {
    margin-left: 34px;
}

/* Workspace */
.workspace-row {
    flex: 1;
    min-height: 0;
    display: flex;
}

.strip {
    height: 26px;
    flex-shrink: 0;
    padding: 0 10px;
    display: flex;
    align-items: center;
    color: #d0d0d0;
    background-color: #424242;
    border-bottom: 2px solid #383838;
}

.strip.double {
    justify-content: space-between;
    padding: 0 14px 0 50px;
}

/* Tools */
.tools {
    width: 153px;
    flex-shrink: 0;
    overflow: hidden;
    border-left: 2px solid #383838;
    border-right: 3px solid #404040;
}

.tool-list {
    padding: 6px 0 0 10px;
    display: flex;
    flex-direction: column;
}

.tool-list .grip {
    margin-left: 42px;
}

.tool-list hr {
    height: 2px;
    margin: 3px 0;
    background-color: #484848;
}

.tool {
    position: relative;
    width: 64px;
    height: 51px;
    padding: 2px 3px;
}

.tool.on {
    width: 58px;
    height: 46px;
    margin: 21px 0 4px 3px;
    padding: 0;
    background-color: #2e2e2e;
    border-radius: 4px;
}

/* Corner mark on tools that hold a flyout */
.tool.more::after {
    content: "";
    position: absolute;
    right: 4px;
    bottom: 2px;
    border-left: 7px solid transparent;
    border-bottom: 7px solid #c4c4c4;
}

.paint {
    margin: 4px 0 5px;
}

.modes {
    height: 44px;
    margin: 0 6px 8px 0;
    display: flex;
    border: 2px solid #5e5e5e;
    border-radius: 4px;
}

.modes button {
    flex: 1;
    display: flex;
    align-items: center;
    justify-content: center;
    border-right: 2px solid #5e5e5e;
}

.modes .on {
    background-color: #2e2e2e;
}

.gradient-chip {
    width: 28px;
    height: 28px;
    border: 2px solid #000;
    background: linear-gradient(to right, #eee, #333);
}

.gradient-chip.big {
    width: 36px;
    height: 25px;
    border-color: #c4c4c4;
    background: linear-gradient(to right, #bbb, #4a4a4a);
}

.screen-mode {
    margin: 7px 0 0 41px;
}

/* Document window */
.document {
    position: relative;
    flex: 1;
    min-width: 0;
    display: flex;
    flex-direction: column;
}

.doc-tabs {
    height: 62px;
    flex-shrink: 0;
    background-color: #424242;
    border-bottom: 2px solid #383838;
}

.view {
    flex: 1;
    min-height: 0;
    display: flex;
}

.canvas {
    flex: 1;
    padding: 173px 59px 171px 60px;
    display: flex;
    background-color: #606060;
}

.artboard {
    flex: 1;
    background-color: #fff;
    border: 2px solid #000;
}

.vscroll {
    width: 38px;
    display: flex;
    flex-direction: column;
    align-items: center;
    justify-content: space-between;
    padding: 650px 0 11px;
    color: #999;
    background-color: #4b4b4b;
    border-left: 2px solid #444;
    border-right: 4px solid #404040;
}

.vscroll .thumb {
    width: 28px;
    height: 60px;
    background-color: #606060;
    border-radius: 14px;
}

.statusbar {
    height: 35px;
    flex-shrink: 0;
    padding: 2px 0 0 5px;
    display: flex;
    align-items: stretch;
    font-size: 18px;
    color: #fff;
    background-color: #4b4b4b;
    border-bottom: 2px solid #383838;
}

.statusbar input {
    padding: 5px 0 0 8px;
    background-color: #444;
    border: 1px solid #5e5e5e;
}

.statusbar .zoom {
    width: 107px;
}

.statusbar .page {
    width: 85px;
}

.statusbar .drop {
    width: 37px;
    padding: 4px 0 0 10px;
    background-color: #444;
    border: 1px solid #5e5e5e;
}

.statusbar .nav {
    width: 87px;
    padding-left: 17px;
    background-color: #535353;
}

.status {
    width: 414px;
    margin-left: 3px;
    text-align: center;
    line-height: 36px;
    overflow: hidden;
    color: #c8c8c8;
    background-color: #535353;
    font-weight: 600;
}

.play {
    width: 35px;
    margin-left: 3px;
    padding-left: 12px;
    background-color: #535353;
}

.hscroll {
    flex: 1;
    padding: 0 52px 0 14px;
    display: flex;
    align-items: center;
    justify-content: space-between;
    color: #999;
}

.hscroll .thumb {
    width: 52px;
    height: 30px;
    background-color: #606060;
    border-radius: 15px;
}

/* Tabs */
.tabs {
    height: 57px;
    flex-shrink: 0;
    display: flex;
    background-color: #424242;
}

.tab {
    padding: 0 0 0 18px;
    white-space: nowrap;
    text-align: left;
    font-weight: 600;
    color: #a6a6a6;
    border-right: 2px solid #383838;
    border-bottom: 2px solid #383838;
}

.tab.on {
    display: flex;
    align-items: center;
    gap: 10px;
    color: #fff;
    font-weight: 700;
    background-color: #535353;
    border-bottom-color: #535353;
}

.tab.on svg {
    margin-left: -10px;
    color: #b0b0b0;
}

.panel-menu {
    flex: 1;
    padding-right: 12px;
    display: flex;
    align-items: center;
    justify-content: flex-end;
    color: #b8b8b8;
    border-bottom: 2px solid #383838;
}

/* Stroke panel */
.stroke-panel {
    position: absolute;
    top: 21px;
    right: 2px;
    width: 483px;
    background-color: #535353;
    border: 2px solid #383838;
    border-top: 8px solid #333;
}

.stroke-panel .tab {
    padding-left: 17px;
}

.stroke-panel .tab.on {
    width: 115px;
    gap: 8px;
}

.gradient-tab {
    width: 105px;
}

.transparency-tab {
    width: 125px;
    font-size: 19px;
}

.tab-extra {
    display: flex;
    align-items: center;
    gap: 15px;
    padding-left: 48px;
    border-bottom: 2px solid #383838;
}

.tab-extra i {
    width: 2px;
    height: 22px;
    background-color: #888;
}

.stroke-panel .panel-menu {
    padding-right: 10px;
}

.stroke-body {
    padding: 12px 8px 13px 9px;
    color: #757575;
    font-weight: 600;
}

.stroke-body hr,
.no-shape {
    border-top: 4px solid #4b4b4b;
}

.stroke-rows {
    display: flex;
    flex-direction: column;
    gap: 12px;
    padding-bottom: 10px;
}

.srow {
    height: 44px;
    display: flex;
    align-items: center;
}

.srow > :first-child {
    width: 119px;
    margin-right: 6px;
    display: flex;
    flex-shrink: 0;
    justify-content: flex-end;
    white-space: nowrap;
    font-size: 18px;
}

.srow .lit {
    color: #d0d0d0;
}

.stepper {
    width: 183px;
    height: 44px;
    display: flex;
    color: #fff;
    background-color: #454545;
    border: 2px solid #5e5e5e;
    border-radius: 4px;
}

.arrows {
    width: 37px;
    display: flex;
    flex-direction: column;
    align-items: center;
    justify-content: space-between;
    padding: 6px 0;
    border-right: 2px solid #5e5e5e;
}

.stepper input {
    flex: 1;
    min-width: 0;
    padding-left: 8px;
}

.stepper button {
    width: 38px;
    padding-left: 10px;
    border-left: 2px solid #5e5e5e;
}

.stepper.off {
    width: 119px;
    margin-right: 13px;
    color: #757575;
    background-color: #595959;
    border: none;
    font-size: 19px;
}

.seg {
    height: 45px;
    display: flex;
    border: 2px solid #616161;
    border-radius: 4px;
}

.seg button {
    width: 46px;
    display: flex;
    align-items: center;
    justify-content: center;
    fill: #707070;
}

.seg button + button {
    border-left: 2px solid #616161;
}

.seg.wide button {
    width: 79px;
}

.limit {
    width: 92px;
    padding-right: 8px;
    text-align: right;
    font-size: 18px;
}

.off-field {
    height: 44px;
    background-color: #595959;
    border-radius: 4px;
    color: #757575;
}

.limit-input {
    width: 81px;
}

.times {
    margin-left: 6px;
    font-size: 18px;
}

.dashed-head {
    height: 46px;
    margin: 10px 0;
    display: flex;
    align-items: center;
    justify-content: space-between;
}

.dashed-label {
    display: flex;
    align-items: center;
    gap: 11px;
    padding-left: 2px;
    color: #fff;
}

input[type="checkbox"] {
    appearance: none;
    width: 25px;
    height: 25px;
    border: 2px solid #757575;
    border-radius: 3px;
}

input.mixed {
    background-color: #3c3c3c;
    border: 8px solid #c4c4c4;
    border-left-width: 7px;
    border-right-width: 7px;
}

.dashes {
    display: grid;
    grid-template-columns: repeat(6, 1fr);
    gap: 6px;
    padding: 1px 2px 8px 0;
}

.dashes label {
    text-align: center;
    font-size: 19px;
    line-height: 28px;
}

.dashes input {
    display: block;
    width: 100%;
    height: 44px;
    background-color: #595959;
    border-radius: 4px;
}

.arrow-rows {
    display: flex;
    flex-direction: column;
    gap: 18px;
    padding: 14px 0 12px;
}

.arrow {
    width: 119px;
    margin-right: 13px;
}

.arrow svg {
    margin: 0 11px;
}

.row-icon {
    width: 50px;
    margin-left: 19px;
    display: flex;
    justify-content: center;
}

.profile-row {
    margin-top: 13px;
}

.profile {
    width: 223px;
}

.profile-row .row-icon {
    margin-left: 10px;
    width: 45px;
}

/* Docked icons */
.docked {
    width: 585px;
    flex-shrink: 0;
    display: flex;
    flex-direction: column;
}

.docked-row {
    flex: 1;
    min-height: 0;
    display: flex;
}

.icon-dock {
    width: 79px;
    flex-shrink: 0;
    border-right: 2px solid #383838;
}

.dock-group {
    padding: 7px 0 3px;
    display: flex;
    flex-direction: column;
    align-items: center;
    border-bottom: 3px solid #383838;
}

.dock-group .grip {
    margin-bottom: 6px;
}

.dock-button {
    width: 58px;
    height: 58px;
    display: flex;
    align-items: center;
    justify-content: center;
}

.dock-button.on {
    height: 49px;
    margin: 2px 0 7px;
    background-color: #333;
    border: 2px solid #636363;
    border-radius: 4px;
}

.glyph {
    gap: 3px;
    color: #c4c4c4;
    font-size: 36px;
    line-height: 40px;
}

.caret {
    width: 2px;
    height: 36px;
    background-color: #c4c4c4;
}

/* Panel column */
.panels {
    flex: 1;
    min-width: 0;
    margin-left: 3px;
    display: flex;
    flex-direction: column;
    gap: 2px;
    background-color: #4a4a4a;
}

.panel {
    display: flex;
    flex-direction: column;
    background-color: #535353;
    border: 2px solid #383838;
    border-right: none;
}

.transform {
    flex: 1;
    min-height: 0;
    border-top: none;
}

.transform-tab {
    width: 147px;
}

.info-tab {
    width: 66px;
}

.libraries-tab {
    width: 108px;
    padding-left: 15px;
}

.links-tab {
    width: 88px;
}

.transform-grid {
    display: grid;
    grid-template-columns: 40px 40px 123px 27px 123px 50px;
    grid-auto-rows: 44px;
    gap: 10px 8px;
    align-items: center;
    padding: 13px 10px 11px;
    color: #757575;
}

.transform-grid label {
    display: flex;
    justify-content: flex-end;
    font-size: 18px;
    font-weight: 600;
}

.transform-grid input {
    width: 100%;
    padding-left: 10px;
    font-size: 19px;
    font-weight: 600;
}

.refpoint {
    grid-row: 1 / span 2;
}

.link-button {
    grid-column: 6;
    grid-row: 1 / span 2;
    height: 50px;
    display: flex;
    align-items: center;
    justify-content: center;
    background-color: #2e2e2e;
    border-radius: 4px;
}

.transform-grid label[for="rotate"] {
    grid-column: 2;
}

.angle {
    width: 119px;
    color: #757575;
    background-color: #595959;
    border: none;
}

.angle select {
    padding-left: 8px;
    color: #757575;
    background: none;
    font-size: 19px;
    opacity: 1;
}

.angle svg {
    margin: 0 14px;
}

.no-shape {
    flex: 1;
    margin: 0 10px;
    display: flex;
    align-items: center;
    justify-content: center;
    color: #757575;
    border-bottom: 4px solid #4b4b4b;
}

.scale-options {
    padding: 13px 12px;
    display: flex;
    flex-direction: column;
    gap: 14px;
    color: #757575;
    font-size: 19px;
    font-weight: 600;
}

.scale-options label {
    display: flex;
    align-items: center;
    gap: 10px;
    height: 27px;
}

/* Swatches */
.swatches-tab {
    width: 128px;
    font-size: 18px;
}

.color-tab {
    width: 76px;
    padding-left: 17px;
}

.guide-tab {
    width: 107px;
    padding-left: 16px;
    font-size: 19px;
}

.swatch-head {
    padding: 13px 10px 11px;
    display: flex;
    align-items: flex-start;
    justify-content: space-between;
}

.view-switch {
    height: 50px;
    display: flex;
    border: 2px solid #5e5e5e;
    border-radius: 4px;
}

.view-switch button {
    width: 49px;
    display: flex;
    align-items: center;
    justify-content: center;
}

.view-switch .on {
    background-color: #2e2e2e;
}

.swatch-list {
    height: 223px;
    margin: 0 10px;
    display: flex;
    justify-content: space-between;
    border: 2px solid #606060;
}

.swatch-row {
    display: flex;
    gap: 2px;
    margin-bottom: 2px;
}

.swatch-row.group {
    margin: 6px 0;
}

.swatch {
    width: 27px;
    height: 27px;
    display: flex;
    align-items: center;
    justify-content: center;
}

.swatch-none {
    background-color: #fff;
}

.swatch-registration {
    background-color: #eee;
}

.swatch-folder {
    color: #c4c4c4;
}

.swatch-fade-black {
    background: linear-gradient(to right, #fff, #000);
}

.swatch-fade-blue {
    background: linear-gradient(to right, #d4e3f7, #29a0dc 50%, #0071bc);
}

.swatch-fade-pink {
    background: linear-gradient(to right, #ff7bac, rgba(255, 123, 172, 0.1)), repeating-conic-gradient(#ccc 0 25%, #fff 0 50%) 0 0 / 8px 8px;
}

.swatch-sun {
    background: radial-gradient(#ffe6cc, #ff931e 70%);
}

.swatch-rings {
    background: radial-gradient(circle, transparent 10px, #e4c94a 11px 12px, #fff 13px), repeating-conic-gradient(#ccc 0 25%, #fff 0 50%) 0 0 / 8px 8px;
}

.swatch-water {
    background-color: #3b79b1;
}

.swatch-leaves {
    background-color: #eee6c0;
}

.faint-scroll {
    padding: 8px 6px;
    display: flex;
    flex-direction: column;
    justify-content: space-between;
    color: #5c5c5c;
}

.panel-foot {
    height: 39px;
    padding: 0 59px 0 20px;
    display: flex;
    align-items: center;
    justify-content: space-between;
    color: #c4c4c4;
}

.panel-foot button:disabled {
    color: #707070;
}

.brushes {
    padding-bottom: 1px;
}

.symbols-tab {
    width: 120px;
}

.brushes-tab {
    width: 112px;
    font-size: 19px;
}

.styles-tab {
    width: 176px;
}

.appearance-tab {
    width: 150px;
    font-size: 19px;
}

.css-tab {
    width: 180px;
}

.layers-tab {
    width: 97px;
}

.artboards-tab {
    width: 135px;
}

/* Appearance */
.appearance {
    height: 145px;
    margin: 13px 10px 0;
    display: flex;
    overflow: hidden;
    border: 2px solid #5e5e5e;
    border-radius: 4px;
}

.appearance-rows {
    flex: 1;
}

.arow {
    height: 52px;
    display: flex;
    align-items: center;
    border-bottom: 2px solid #606060;
}

.arow.first {
    padding-left: 4px;
}

.thumb-box {
    width: 41px;
    height: 41px;
    margin-right: 59px;
    background-color: #fff;
    border: 2px solid #2b2b2b;
}

.eye-cell {
    width: 52px;
    height: 100%;
    padding-left: 9px;
    display: flex;
    align-items: center;
    color: #c4c4c4;
    border-right: 2px solid #404040;
}

.eye-cell.faded {
    color: #757575;
}

.twirl {
    margin: 0 22px 0 13px;
    color: #fff;
}

.none-chip {
    margin-left: 22px;
}

.opacity-row {
    padding-left: 99px;
    color: #fff;
    font-size: 19px;
    font-weight: 600;
}

.opacity-row em {
    margin-left: 8px;
    font-style: normal;
    color: #ddd;
}

.list-scroll {
    width: 25px;
    padding: 8px 0 10px;
    display: flex;
    flex-direction: column;
    align-items: center;
    color: #999;
    background-color: #4b4b4b;
}

.list-scroll .thumb {
    width: 21px;
    height: 52px;
    margin: 8px 0 auto;
    background-color: #606060;
    border-radius: 10px;
}

.appearance-foot {
    height: 41px;
    justify-content: flex-start;
    padding: 0 48px 0 22px;
    gap: 30px;
}

.appearance-foot .fx {
    margin-right: 118px;
    font: italic 28px/28px "Liberation Serif", serif;
}

/* Taskbar */
.taskbar {
    width: 129px;
    flex-shrink: 0;
    display: flex;
    flex-direction: column;
    color: #fff;
    background-color: #040d17;
    border-bottom: 9px solid #040d17;
}

.taskbar button {
    display: flex;
    align-items: center;
    justify-content: center;
}

.sys {
    height: 83px;
}

.task {
    height: 98px;
    border-right: 4px solid transparent;
    border-left: 4px solid transparent;
}

.sys + .task {
    margin-top: 4px;
}

.task.running {
    border-right-color: #76b9ed;
}

.task.current {
    background-color: #3a424b;
    border-left-color: #3a424b;
}

.ai-tile {
    width: 45px;
    height: 43px;
    font-size: 24px;
    font-weight: 600;
    line-height: 36px;
    color: #ff7f18;
    background-color: #261300;
    border: 3px solid #ff7c00;
}

.tray {
    margin-top: auto;
    display: flex;
    flex-direction: column;
    border-bottom: 2px solid #707881;
}

.people {
    height: 68px;
}

.tray-chevron {
    width: 68px;
    height: 60px;
}

.tray-icons {
    height: 48px;
    padding: 0 25px 0 16px;
    display: flex;
    align-items: center;
    justify-content: space-between;
}

.lang {
    height: 76px;
    text-align: center;
    line-height: 72px;
    font-size: 22px;
}

.clock {
    height: 106px;
    padding-top: 22px;
    text-align: center;
    line-height: 35px;
    font-size: 23px;
    white-space: nowrap;
}

.action {
    height: 92px;
}
```
